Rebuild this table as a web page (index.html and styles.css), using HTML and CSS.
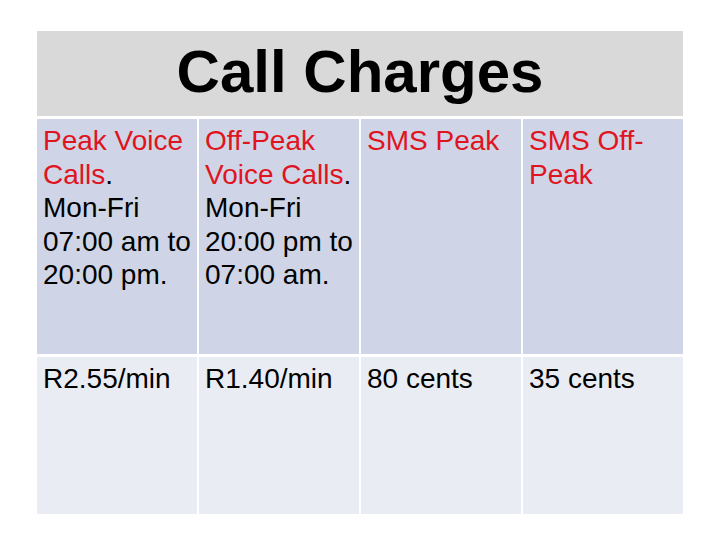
FILE: index.html
```html
<!DOCTYPE html>
<html>
<head>
<meta charset="utf-8">
<link rel="stylesheet" href="styles.css">
</head>
<body>
<div class="table">
  <div class="title">Call Charges</div>
  <div class="cell head"><span class="red">Peak Voice Calls</span>.<br>Mon-Fri<br>07:00 am to<br>20:00 pm.</div>
  <div class="cell head"><span class="red">Off-Peak Voice Calls</span>.<br>Mon-Fri<br>20:00 pm to<br>07:00 am.</div>
  <div class="cell head"><span class="red">SMS Peak</span></div>
  <div class="cell head"><span class="red">SMS Off-Peak</span></div>
  <div class="cell body">R2.55/min</div>
  <div class="cell body">R1.40/min</div>
  <div class="cell body">80 cents</div>
  <div class="cell body">35 cents</div>
</div>
</body>
</html>
```
FILE: styles.css
```css
html, body {
  margin: 0;
  padding: 0;
  background: #ffffff;
}
body {
  padding: 31px 0 0 37px;
  font-family: "Liberation Sans", Arial, sans-serif;
}
.table {
  display: grid;
  grid-template-columns: repeat(4, 160px);
  grid-template-rows: 85px 235px 157px;
  column-gap: 2px;
  row-gap: 3px;
  width: 646px;
}
.title {
  grid-column: 1 / 5;
  background: #d9d9d9;
  font-size: 60px;
  font-weight: bold;
  text-align: center;
  color: #000;
  padding-top: 6px;
  box-sizing: border-box;
}
.cell {
  font-size: 28px;
  line-height: 33.6px;
  padding: 5px 6px;
  color: #000;
  box-sizing: border-box;
}
.head {
  background: #cfd5e6;
}
.body {
  background: #e9ecf3;
}
.red {
  color: #e0141e;
}
```
